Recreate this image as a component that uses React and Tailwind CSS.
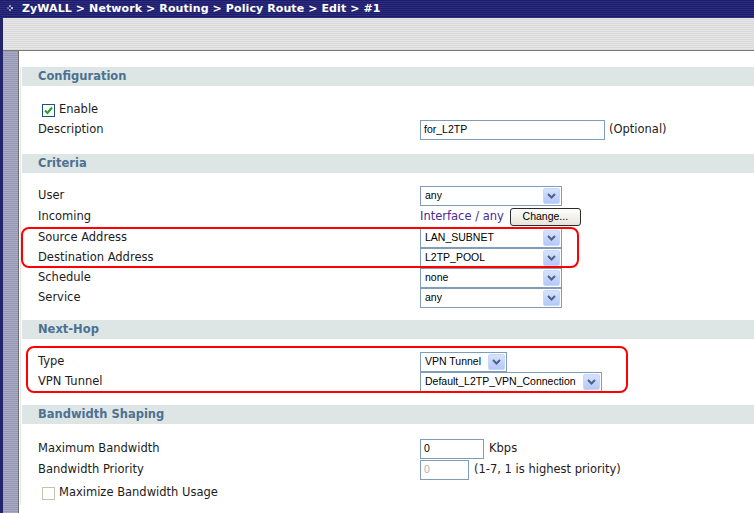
import React from 'react';

const labelFont = { fontFamily: '"DejaVu Sans", Verdana, sans-serif' };
const ctrlFont = { fontFamily: '"Liberation Sans", Tahoma, Arial, sans-serif' };

const SectionBar = ({ title }) => (
    <div className="h-[19px] bg-[#dee6e5] pl-4 flex items-center text-[11.5px] font-bold text-[#4c7192]">
        {title}
    </div>
);

const Row = ({ label, children, h = 'h-[20px]' }) => (
    <div className={`grid grid-cols-[382px_1fr] items-center ${h}`}>
        <span className="text-[11.5px] text-[#1c1c1c]">{label}</span>
        <div className="flex items-center">{children}</div>
    </div>
);

const Select = ({ value, width }) => (
    <div
        className="h-[20px] border border-[#7f9db9] bg-white flex items-center justify-between pl-[4px] pr-[1px]"
        style={{ width }}
    >
        <span style={ctrlFont} className="text-[10.5px] text-black">{value}</span>
        <span className="w-[17px] h-[16px] rounded-[2px] bg-gradient-to-b from-[#d6e2fe] to-[#b4c8f8] border border-[#c9d6f5] flex items-center justify-center">
            <svg width="9" height="6" viewBox="0 0 9 6">
                <path d="M1 1 L4.5 4.5 L8 1" fill="none" stroke="#4d6185" strokeWidth="2" />
            </svg>
        </span>
    </div>
);

const Input = ({ value, width, disabled }) => (
    <div
        className="h-[20px] border border-[#7f9db9] bg-white flex items-center pl-[3px]"
        style={{ width }}
    >
        <span style={ctrlFont} className={`text-[10.5px] ${disabled ? 'text-[#b0b0b0]' : 'text-black'}`}>{value}</span>
    </div>
);

const Checkbox = ({ checked, disabled }) => (
    <span
        className={`w-[13px] h-[13px] border bg-white flex items-center justify-center ${disabled ? 'border-[#c5c2b2]' : 'border-[#1c5180]'}`}
    >
        {checked && (
            <svg width="9" height="9" viewBox="0 0 9 9">
                <path d="M1 4.5 L3.5 7 L8 1.5" fill="none" stroke="#21a121" strokeWidth="2" />
            </svg>
        )}
    </span>
);

export default function App() {
    return (
        <div className="w-[754px] h-[513px] overflow-hidden relative flex flex-col bg-white" style={labelFont}>
            {/* Title bar */}
            <div className="h-[18px] shrink-0 flex items-center bg-[repeating-linear-gradient(180deg,#1c1c68_0px,#1c1c68_1px,#2d2d82_1px,#2d2d82_2px)]">
                <svg width="22" height="18" viewBox="0 0 22 18" className="shrink-0">
                    <rect x="9" y="5" width="2" height="2" fill="#9a9ab0" />
                    <rect x="11" y="7" width="2" height="2" fill="#c0c0d0" />
                    <rect x="9" y="9" width="2" height="2" fill="#9a9ab0" />
                    <rect x="7" y="7" width="2" height="2" fill="#6a6a90" />
                </svg>
                <span className="text-[11px] font-bold text-white tracking-[0.1px]">
                    ZyWALL &gt; Network &gt; Routing &gt; Policy Route &gt; Edit &gt; #1
                </span>
            </div>

            <div className="flex-1 min-h-0 flex">
                {/* left rail */}
                <div className="w-[3px] shrink-0 bg-[#23236b]" />
                <div className="flex-1 flex flex-col">
                    <div className="h-[33px] shrink-0 border-b border-[#7a7a7a] bg-[repeating-linear-gradient(180deg,#e6e6e6_0px,#e6e6e6_1px,#d9d9d9_1px,#d9d9d9_2px)]" />
                    <div className="flex-1 flex">
                        <div className="w-[15px] shrink-0 bg-[repeating-linear-gradient(180deg,#9597b5_0px,#9597b5_1px,#a9abc5_1px,#a9abc5_2px)]" />
                        {/* content panel */}
                        <div className="flex-1 border-l border-[#6e6e6e] pl-[3px] pt-[16px] bg-white">
                            <div className="border-l border-[#e4e4e4] -ml-[2px] pl-[1px]">
                                <SectionBar title="Configuration" />
                                <div className="px-4 pt-[14px] pb-[14px]">
                                    <div className="flex items-center h-[20px] pl-[4px] gap-[4px]">
                                        <Checkbox checked />
                                        <span className="text-[11.5px] text-[#1c1c1c]">Enable</span>
                                    </div>
                                    <Row label="Description">
                                        <Input value="for_L2TP" width={185} />
                                        <span className="ml-[4px] text-[11.5px] text-[#1c1c1c]">(Optional)</span>
                                    </Row>
                                </div>

                                <SectionBar title="Criteria" />
                                <div className="px-4 pt-[13px] pb-[12px]">
                                    <Row label="User"><Select value="any" width={142} /></Row>
                                    <Row label="Incoming" h="h-[22px]">
                                        <span className="text-[11.5px] text-[#4a2a94]">Interface / any</span>
                                        <button
                                            style={ctrlFont}
                                            className="ml-[6px] w-[71px] h-[18px] rounded-[3px] border border-[#2b2b2b] bg-gradient-to-b from-white to-[#e6e4da] text-[10.5px] text-black pb-[2px]"
                                        >
                                            Change...
                                        </button>
                                    </Row>
                                    <Row label="Source Address"><Select value="LAN_SUBNET" width={142} /></Row>
                                    <Row label="Destination Address"><Select value="L2TP_POOL" width={142} /></Row>
                                    <Row label="Schedule"><Select value="none" width={142} /></Row>
                                    <Row label="Service"><Select value="any" width={142} /></Row>
                                </div>

                                <SectionBar title="Next-Hop" />
                                <div className="px-4 pt-[13px] pb-[13px]">
                                    <Row label="Type"><Select value="VPN Tunnel" width={87} /></Row>
                                    <Row label="VPN Tunnel"><Select value="Default_L2TP_VPN_Connection" width={182} /></Row>
                                </div>

                                <SectionBar title="Bandwidth Shaping" />
                                <div className="px-4 pt-[14px]">
                                    <Row label="Maximum Bandwidth" h="h-[21px]">
                                        <Input value="0" width={64} />
                                        <span className="ml-[5px] text-[11.5px] text-[#2a1a1a]">Kbps</span>
                                    </Row>
                                    <Row label="Bandwidth Priority" h="h-[22px]">
                                        <Input value="0" width={49} disabled />
                                        <span className="ml-[5px] text-[11.5px] text-[#2a1a1a]">(1-7, 1 is highest priority)</span>
                                    </Row>
                                    <div className="flex items-center h-[24px] pl-[4px] gap-[4px]">
                                        <Checkbox disabled />
                                        <span className="text-[11.5px] text-[#1c1c1c]">Maximize Bandwidth Usage</span>
                                    </div>
                                </div>
                            </div>
                        </div>
                    </div>
                </div>
            </div>

            {/* red annotation outlines */}
            <div className="absolute left-[21px] top-[227px] w-[558px] h-[41px] border-2 border-[#ff0000] rounded-[8px] pointer-events-none" />
            <div className="absolute left-[26px] top-[346px] w-[602px] h-[47px] border-2 border-[#ff0000] rounded-[8px] pointer-events-none" />
        </div>
    );
}
